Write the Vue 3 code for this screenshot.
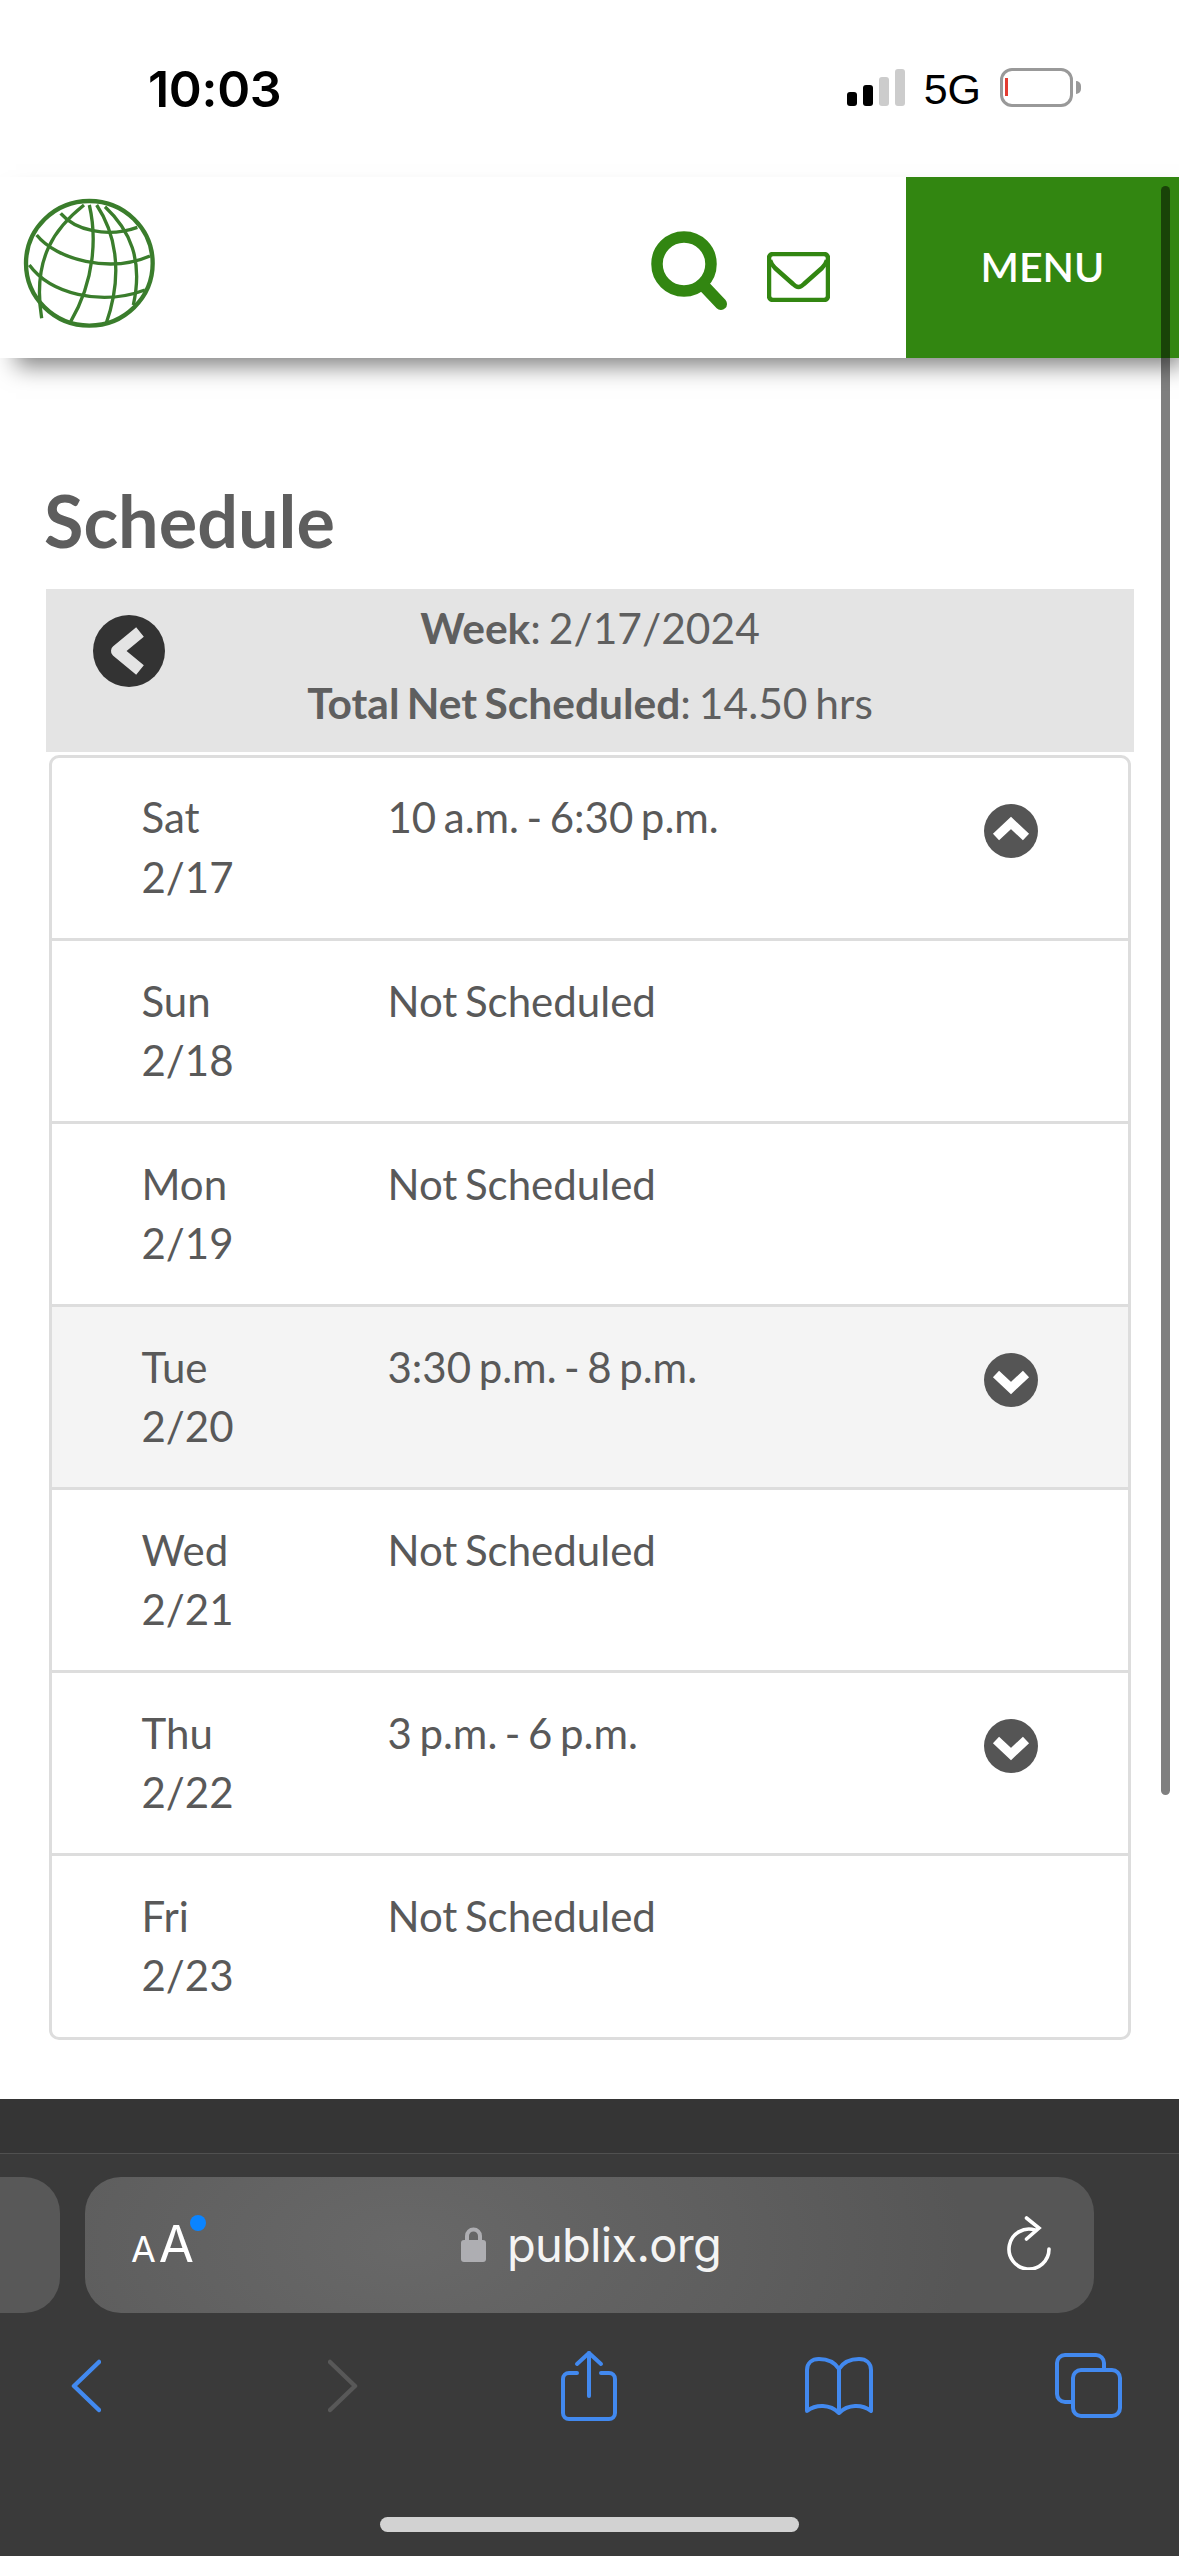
<script setup>
const rows = [
  { day: 'Sat', date: '2/17', time: '10 a.m. - 6:30 p.m.', icon: 'up' },
  { day: 'Sun', date: '2/18', time: 'Not Scheduled' },
  { day: 'Mon', date: '2/19', time: 'Not Scheduled' },
  { day: 'Tue', date: '2/20', time: '3:30 p.m. - 8 p.m.', icon: 'down', shaded: true },
  { day: 'Wed', date: '2/21', time: 'Not Scheduled' },
  { day: 'Thu', date: '2/22', time: '3 p.m. - 6 p.m.', icon: 'down' },
  { day: 'Fri', date: '2/23', time: 'Not Scheduled' }
]
</script>

<template>
  <div class="phone">
    <div class="status">
      <span class="clock">10:03</span>
      <div class="signal">
        <i class="b b1"></i><i class="b b2"></i><i class="b b3"></i><i class="b b4"></i>
      </div>
      <span class="net">5G</span>
      <div class="battery"><i class="level"></i></div>
      <i class="nub"></i>
    </div>

    <header class="site">
      <svg class="globe" width="180" height="181" viewBox="0 21 540 543" fill="none" stroke="#3a7d2c">
        <ellipse cx="268" cy="280" rx="190" ry="187" stroke-width="13" />
        <g stroke-width="10">
          <path d="M182 130C225 180 320 205 412 172" />
          <path d="M110 195C170 270 330 310 450 258" />
          <path d="M88 285C150 370 300 410 435 360" />
          <path d="M252 105C170 170 95 260 125 445" />
          <path d="M268 105C290 200 285 330 212 455" />
          <path d="M290 105C340 180 375 300 318 462" />
          <path d="M315 110C390 180 430 270 400 405" />
        </g>
      </svg>
      <svg class="search" width="80" height="80" viewBox="0 0 80 80" fill="none" stroke="#328611">
        <circle cx="34" cy="33" r="27" stroke-width="11.5" />
        <path d="M53 54L71 73" stroke-width="12" stroke-linecap="round" />
      </svg>
      <svg class="mail" width="63" height="50" viewBox="0 0 63 50" fill="none" stroke="#328611" stroke-width="4.500">
        <rect x="2" y="2" width="59" height="46" rx="4" />
        <path d="M3 8C4 12 5 13 8 16L26 32C30 36 33 36 37 32L55 16C58 13 59 12 60 8" />
      </svg>
      <div class="menu">MENU</div>
    </header>

    <main class="content">
      <h1>Schedule</h1>
      <section class="week">
        <svg class="prev" width="72" height="72" viewBox="0 0 72 72">
          <circle cx="36" cy="36" r="36" fill="#333" />
          <path d="M47 17L24 36L47 55" fill="none" stroke="#e4e4e4" stroke-width="12" stroke-linejoin="round" />
        </svg>
        <p class="line"><b>Week</b>: 2/17/2024</p>
        <p class="line"><b>Total Net Scheduled</b>: 14.50 hrs</p>
      </section>
      <ul class="list">
        <li v-for="r in rows" :key="r.day" class="row" :class="{ shaded: r.shaded }">
          <div class="day">{{ r.day }}<br />{{ r.date }}</div>
          <div class="time">{{ r.time }}</div>
          <svg v-if="r.icon" class="toggle" width="54" height="54" viewBox="0 0 54 54">
            <circle cx="27" cy="27" r="27" fill="#555" />
            <path v-if="r.icon === 'up'" d="M12 33L27 19L42 33" fill="none" stroke="#fff" stroke-width="9" />
            <path v-else d="M12 21L27 35L42 21" fill="none" stroke="#fff" stroke-width="9" />
          </svg>
        </li>
      </ul>
    </main>

    <footer class="browser">
      <div class="bar-row">
        <div class="stub"></div>
        <div class="url">
          <div class="aa">
            <span class="a-sm">A</span><span class="a-lg">A</span>
            <i class="dot"></i>
          </div>
          <div class="addr">
            <svg width="25" height="36" viewBox="0 0 25 36">
              <path d="M6 16V10a6.5 6.5 0 0 1 13 0V16" fill="none" stroke="#aeaeb2" stroke-width="4" />
              <rect x="0" y="14" width="25" height="22" rx="3" fill="#aeaeb2" />
            </svg>
            <span>publix.org</span>
          </div>
          <svg class="reload" width="44" height="54" viewBox="0 0 44 54" fill="none" stroke="#fff" stroke-width="3.6" stroke-linecap="round">
            <path d="M28 14A20 20 0 1 0 42 33" />
            <path d="M19.500 2L32 12L19.500 23" />
          </svg>
        </div>
      </div>
      <nav class="tools">
        <svg class="t-back" width="30" height="54" viewBox="0 0 30 54" fill="none" stroke="#4289ef" stroke-width="4.500" stroke-linecap="round" stroke-linejoin="round">
          <path d="M28 3L3 27L28 51" />
        </svg>
        <svg class="t-fwd" width="30" height="54" viewBox="0 0 30 54" fill="none" stroke="#585858" stroke-width="4.500" stroke-linecap="round" stroke-linejoin="round">
          <path d="M2 3L27 27L2 51" />
        </svg>
        <svg class="t-share" width="56" height="71" viewBox="0 0 56 71" fill="none" stroke="#4289ef" stroke-width="4" stroke-linecap="round" stroke-linejoin="round">
          <path d="M16 23H8a6 6 0 0 0-6 6V63a6 6 0 0 0 6 6H48a6 6 0 0 0 6-6V29a6 6 0 0 0-6-6H40" />
          <path d="M28 3V46" />
          <path d="M16 14L28 3L40 14" />
        </svg>
        <svg class="t-book" width="70" height="58" viewBox="0 0 70 58" fill="none" stroke="#4289ef" stroke-width="4" stroke-linejoin="round">
          <path d="M35 12C30 4 22 2 15 2C8 2 3 6 3 13V54C12 47 26 47 35 56C44 47 58 47 67 54V13C67 6 62 2 55 2C48 2 40 4 35 12Z" />
          <path d="M35 12V56" />
        </svg>
        <svg class="t-tabs" width="67" height="65" viewBox="0 0 67 65" fill="none" stroke="#4289ef" stroke-width="4">
          <path d="M49 16V10a8 8 0 0 0-8-8H10a8 8 0 0 0-8 8V41a8 8 0 0 0 8 8H17" />
          <rect x="18" y="17" width="47" height="46" rx="8" />
        </svg>
      </nav>
      <div class="home"></div>
    </footer>

    <div class="scrollbar"></div>
  </div>
</template>

<style scoped>
.phone {
  position: relative;
  width: 1179px;
  height: 2556px;
  display: flex;
  flex-direction: column;
  overflow: hidden;
  background: #fff;
  font-family: Lato, "Open Sans", sans-serif;
  color: #555;
}
.status {
  height: 177px;
  flex: none;
  display: flex;
  align-items: flex-start;
  position: relative;
}
.clock {
  margin: 59px 0 0 148px;
  font: 600 50px/60px Inter, sans-serif;
  color: #000;
  letter-spacing: -0.3px;
}
.signal {
  margin: 69px 0 0 auto;
  height: 37px;
  display: flex;
  align-items: flex-end;
  gap: 6px;
}
.b {
  display: block;
  width: 10px;
  border-radius: 3px;
  background: #000;
}
.b1 { height: 14px; }
.b2 { height: 21px; }
.b3 { height: 29px; background: #ccc; }
.b4 { height: 37px; background: #ccc; }
.net {
  margin: 64px 0 0 19px;
  font: 400 43px/50px "Liberation Sans", sans-serif;
  color: #000;
}
.battery {
  margin: 68px 0 0 19px;
  box-sizing: border-box;
  width: 73px;
  height: 39px;
  border: 3px solid #999;
  border-radius: 12px;
  padding: 7px 0 0 2px;
}
.level {
  display: block;
  width: 3px;
  height: 18px;
  background: #e33c32;
}
.nub {
  margin: 81px 98px 0 3px;
  width: 5px;
  height: 13px;
  background: #999;
  border-radius: 0 6px 6px 0;
}
.site {
  height: 181px;
  flex: none;
  display: flex;
  align-items: flex-start;
  background: #fff;
  box-shadow: 10px 14px 22px -6px rgba(0, 0, 0, 0.5);
  position: relative;
}
.globe { flex: none; }
.search { margin: 54px 0 0 470px; flex: none; }
.mail { margin: 75px 0 0 37px; flex: none; }
.menu {
  margin-left: auto;
  box-sizing: border-box;
  width: 273px;
  height: 181px;
  padding-bottom: 3px;
  background: #328611;
  color: #fff;
  display: flex;
  align-items: center;
  justify-content: center;
  font-size: 41px;
  font-weight: 600;
}
.content {
  flex: 1;
  padding: 0 46px;
}
h1 {
  margin: 0 0 0 -2px;
  padding-top: 122px;
  height: 109px;
  font-size: 72px;
  line-height: 80px;
  font-weight: 700;
  color: #5e5e5e;
}
.week {
  position: relative;
  height: 163px;
  box-sizing: border-box;
  padding-top: 1px;
  background: #e4e4e4;
  width: 1088px;
  text-align: center;
}
.prev { position: absolute; left: 47px; top: 26px; }
.line {
  margin: 0;
  font-size: 42.5px;
  line-height: 75px;
  word-spacing: -3px;
  color: #5f5f5f;
}
.list {
  list-style: none;
  margin: 3px 0 0 3px;
  padding: 0;
  width: 1082px;
  box-sizing: border-box;
  border: 3px solid #ddd;
  border-radius: 10px;
  overflow: hidden;
}
.row {
  position: relative;
  display: flex;
  align-items: flex-start;
  box-sizing: border-box;
  height: 183px;
  padding: 30.5px 0 0 89.5px;
  font-size: 42px;
  line-height: 59.500px;
  word-spacing: -3.2px;
  color: #595959;
  border-top: 3px solid #ddd;
}
.row:first-child { border-top: 0; height: 180px; padding-top: 30px; }
.row:last-child { height: 184px; }
.row.shaded { background: #f4f4f4; }
.day { width: 246px; flex: none; }
.toggle { position: absolute; left: 932px; top: 46px; }
.browser {
  flex: none;
  height: 457px;
  box-sizing: border-box;
  padding-top: 78px;
  display: flex;
  flex-direction: column;
  position: relative;
  color: #fff;
  background: linear-gradient(180deg, #353535 0, #353535 54px, #3a3a3a 55px, #3a3a3a 100%);
}
.browser::before {
  content: "";
  position: absolute;
  left: 0;
  right: 0;
  top: 54px;
  height: 1px;
  background: #505050;
}
.bar-row {
  display: flex;
  gap: 25px;
  height: 136px;
}
.stub {
  width: 60px;
  background: #585858;
  border-radius: 0 36px 36px 0;
}
.url {
  width: 1009px;
  display: grid;
  grid-template-columns: 1fr auto 1fr;
  align-items: center;
  box-sizing: border-box;
  padding: 0 43px 0 46px;
  border-radius: 36px;
  background: radial-gradient(ellipse 560px 300px at 320px 50%, #686868 0, #5e5e5e 60%, #565656 100%);
}
.aa {
  position: relative;
  display: flex;
  align-items: baseline;
  gap: 3px;
  font-family: Inter, sans-serif;
  width: 70px;
  margin-top: 2px;
}
.a-sm { font-size: 36px; line-height: 54px; }
.a-lg { font-size: 51px; line-height: 54px; }
.dot {
  position: absolute;
  left: 59px;
  top: -2px;
  width: 16px;
  height: 16px;
  border-radius: 50%;
  background: #0a84ff;
}
.addr {
  display: flex;
  align-items: center;
  gap: 21px;
  font: 400 47px/56px Inter, sans-serif;
  letter-spacing: -0.7px;
  color: #f4f4f4;
}
.addr svg { margin-top: -2px; }
.reload { justify-self: end; margin-top: -4px; }
.tools {
  display: flex;
  align-items: center;
  height: 71px;
  margin-top: 37px;
  padding-left: 71px;
}
.t-fwd { margin-left: 227px; }
.t-share { margin-left: 203px; }
.t-book { margin-left: 187px; }
.t-tabs { margin-left: 181px; }
.home {
  width: 419px;
  height: 15px;
  margin: 96px 0 0 380px;
  border-radius: 8px;
  background: #d2d2d2;
}
.scrollbar {
  position: absolute;
  left: 1161px;
  top: 186px;
  width: 9px;
  height: 1609px;
  border-radius: 5px;
  background: rgba(0, 0, 0, 0.5);
}
</style>

<style>
html, body { margin: 0; background: #fff; }
</style>
